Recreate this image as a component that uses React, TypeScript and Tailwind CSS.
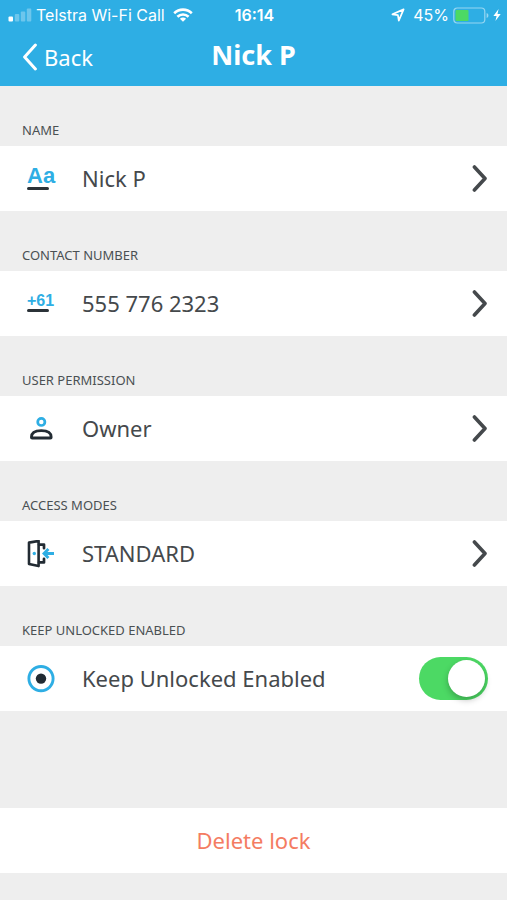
import { useState, type ReactNode } from "react";

function SignalIcon() {
  return (
    <svg width="24" height="14" viewBox="0 0 24 14" fill="#fff" aria-hidden="true">
      <rect x="0.5" y="8.5" width="4.5" height="5" rx="1" />
      <rect x="6.8" y="6" width="4.5" height="7.5" rx="1" opacity="0.3" />
      <rect x="12.8" y="3.5" width="4.5" height="10" rx="1" opacity="0.3" />
      <rect x="18.8" y="0.5" width="4.5" height="13" rx="1" opacity="0.3" />
    </svg>
  );
}

function WifiIcon() {
  return (
    <svg width="20" height="14" viewBox="0 0 20 14" fill="none" stroke="#fff" strokeWidth="2.6" aria-hidden="true">
      <path d="M1.2 5.2C6.2 0.4 13.8 0.4 18.8 5.2" />
      <path d="M4.4 8.8C7.6 5.8 12.4 5.8 15.6 8.8" />
      <path d="M10 13.8L6.9 10.8C8.7 9.2 11.3 9.2 13.1 10.8Z" fill="#fff" stroke="none" />
    </svg>
  );
}

function LocationIcon() {
  return (
    <svg width="14" height="14" viewBox="0 0 14 14" fill="none" stroke="#fff" strokeWidth="1.7" strokeLinejoin="round" aria-hidden="true">
      <path d="M12.6 1.4L1.4 6.3L6.9 7.1L7.8 12.6Z" />
    </svg>
  );
}

function BatteryIcon() {
  return (
    <svg width="36" height="17" viewBox="0 0 36 17" aria-hidden="true">
      <rect x="0.8" y="1" width="31" height="15" rx="3.5" fill="none" stroke="#fff" strokeOpacity="0.5" strokeWidth="1.2" />
      <path d="M33.6 6C35 6.6 35.4 7.5 35.4 8.5S35 10.4 33.6 11Z" fill="#fff" fillOpacity="0.5" />
      <rect x="2.5" y="3" width="13" height="11" rx="1" fill="#4cd964" />
    </svg>
  );
}

function BoltIcon() {
  return (
    <svg width="8" height="14" viewBox="0 0 8 14" fill="#fff" aria-hidden="true">
      <path d="M5.6 1L0.4 7.9H3.6L2.4 13L7.7 6H4.5Z" />
    </svg>
  );
}

function PersonIcon() {
  return (
    <svg width="28" height="28" viewBox="0 0 28 28" fill="none" aria-hidden="true">
      <circle cx="14.3" cy="6.9" r="3.6" stroke="#2eaee4" strokeWidth="2.7" />
      <path d="M4.4 22.2C4.4 17.4 8.6 15.6 14.3 15.6S24.2 17.4 24.2 22.2Q24.2 23 23.4 23H5.2Q4.4 23 4.4 22.2Z" stroke="#222b33" strokeWidth="2.8" strokeLinejoin="round" />
    </svg>
  );
}

function DoorIcon() {
  return (
    <svg width="28" height="28" viewBox="0 0 28 28" fill="none" aria-hidden="true">
      <path d="M2 2.6L11.6 0.9V26.1L2 24Z" stroke="#222b33" strokeWidth="2.6" strokeLinejoin="round" />
      <path d="M12 4.6H17V8.2M12 22.4H17V18.8" stroke="#222b33" strokeWidth="2.7" strokeLinejoin="round" strokeLinecap="round" />
      <circle cx="7.3" cy="13.5" r="1.7" fill="#2eaee4" />
      <path d="M27 13.5H17.8M21.4 8.9L17 13.5L21.4 18.1" stroke="#2eaee4" strokeWidth="2.9" />
    </svg>
  );
}

function TargetIcon() {
  return (
    <svg width="28" height="28" viewBox="0 0 28 28" fill="none" aria-hidden="true">
      <circle cx="14" cy="13.6" r="12.1" stroke="#2eaee4" strokeWidth="2.9" />
      <circle cx="14" cy="13.6" r="5.2" fill="#222b33" />
    </svg>
  );
}

function ChevronRight() {
  return (
    <svg width="16" height="28" viewBox="0 0 16 28" fill="none" stroke="#45494c" strokeWidth="3.6" strokeLinecap="round" strokeLinejoin="round" aria-hidden="true">
      <path d="M2.4 2L13 13.5L2.4 25" />
    </svg>
  );
}

function TextIcon({ text, size }: { text: string; size: string }) {
  return (
    <span className="flex flex-col pb-[2px]" aria-hidden="true">
      <span className={`font-["Liberation_Sans"] font-bold text-[#2eaee4] ${size}`}>{text}</span>
      <span className="h-[3px] w-[22px] rounded-full bg-[#2b3238]" />
    </span>
  );
}

function SectionLabel({ children }: { children: ReactNode }) {
  return (
    <h2 className="flex h-[60px] items-end px-[22px] pb-[6px] text-[13px] leading-5 text-[#4a5053]">
      {children}
    </h2>
  );
}

const rowClass = "flex h-[65px] w-full items-center bg-white pl-[27px] pr-[19px] text-left text-[22px] text-[#45494c]";

function Section({ label, icon, value }: { label: string; icon: ReactNode; value: string }) {
  return (
    <section>
      <SectionLabel>{label}</SectionLabel>
      <button type="button" className={rowClass}>
        <span className="flex w-[55px] shrink-0">{icon}</span>
        <span className="flex-1">{value}</span>
        <ChevronRight />
      </button>
    </section>
  );
}

export default function App() {
  const [unlocked, setUnlocked] = useState(true);

  return (
    <div className='min-h-screen bg-[#eeeeee] font-["Noto_Sans",sans-serif]'>
      <header className="h-[86px] bg-[#2eaee4] text-white">
        <div className='grid h-[30px] grid-cols-[1fr_auto_1fr] items-center pl-2 pr-[6px] font-["Inter",sans-serif] text-[16px]'>
          <div className="flex items-center gap-1">
            <SignalIcon />
            <span className="mr-1 whitespace-nowrap">Telstra Wi-Fi Call</span>
            <WifiIcon />
          </div>
          <span className="font-semibold">16:14</span>
          <div className="flex items-center justify-end">
            <LocationIcon />
            <span className="ml-2 mr-1">45%</span>
            <BatteryIcon />
            <span className="ml-1">
              <BoltIcon />
            </span>
          </div>
        </div>
        <div className="grid h-[54px] grid-cols-[1fr_auto_1fr] items-center px-[22px]">
          <button type="button" className="flex items-center gap-[6px] text-[22px]">
            <svg width="16" height="28" viewBox="0 0 16 28" fill="none" stroke="#fff" strokeWidth="3" strokeLinecap="round" strokeLinejoin="round" aria-hidden="true">
              <path d="M13.4 2L2.6 14L13.4 26" />
            </svg>
            Back
          </button>
          <h1 className="pb-1 text-[27px] font-bold">Nick P</h1>
        </div>
      </header>

      <main>
        <Section label="NAME" value="Nick P" icon={<TextIcon text="Aa" size="text-[22px] leading-[22px]" />} />
        <Section label="CONTACT NUMBER" value="555 776 2323" icon={<TextIcon text="+61" size="text-[16px] leading-4" />} />
        <Section label="USER PERMISSION" value="Owner" icon={<PersonIcon />} />
        <Section label="ACCESS MODES" value="STANDARD" icon={<DoorIcon />} />
        <section>
          <SectionLabel>KEEP UNLOCKED ENABLED</SectionLabel>
          <div className={rowClass}>
            <span className="flex w-[55px] shrink-0">
              <TargetIcon />
            </span>
            <label htmlFor="keep-unlocked" className="flex-1">
              Keep Unlocked Enabled
            </label>
            <input
              id="keep-unlocked"
              type="checkbox"
              role="switch"
              checked={unlocked}
              onChange={(e) => setUnlocked(e.target.checked)}
              className="flex h-[43px] w-[69px] shrink-0 cursor-pointer appearance-none items-center rounded-full bg-[#d9d9d9] px-[3px] before:size-[37px] before:rounded-full before:bg-white before:shadow-[0_3px_6px_rgba(0,0,0,0.25)] before:content-[''] checked:justify-end checked:bg-[#4cd964]"
            />
          </div>
        </section>
        <button type="button" className="mt-[97px] h-[65px] w-full bg-white text-[22px] text-[#f47c62]">
          Delete lock
        </button>
      </main>
    </div>
  );
}
